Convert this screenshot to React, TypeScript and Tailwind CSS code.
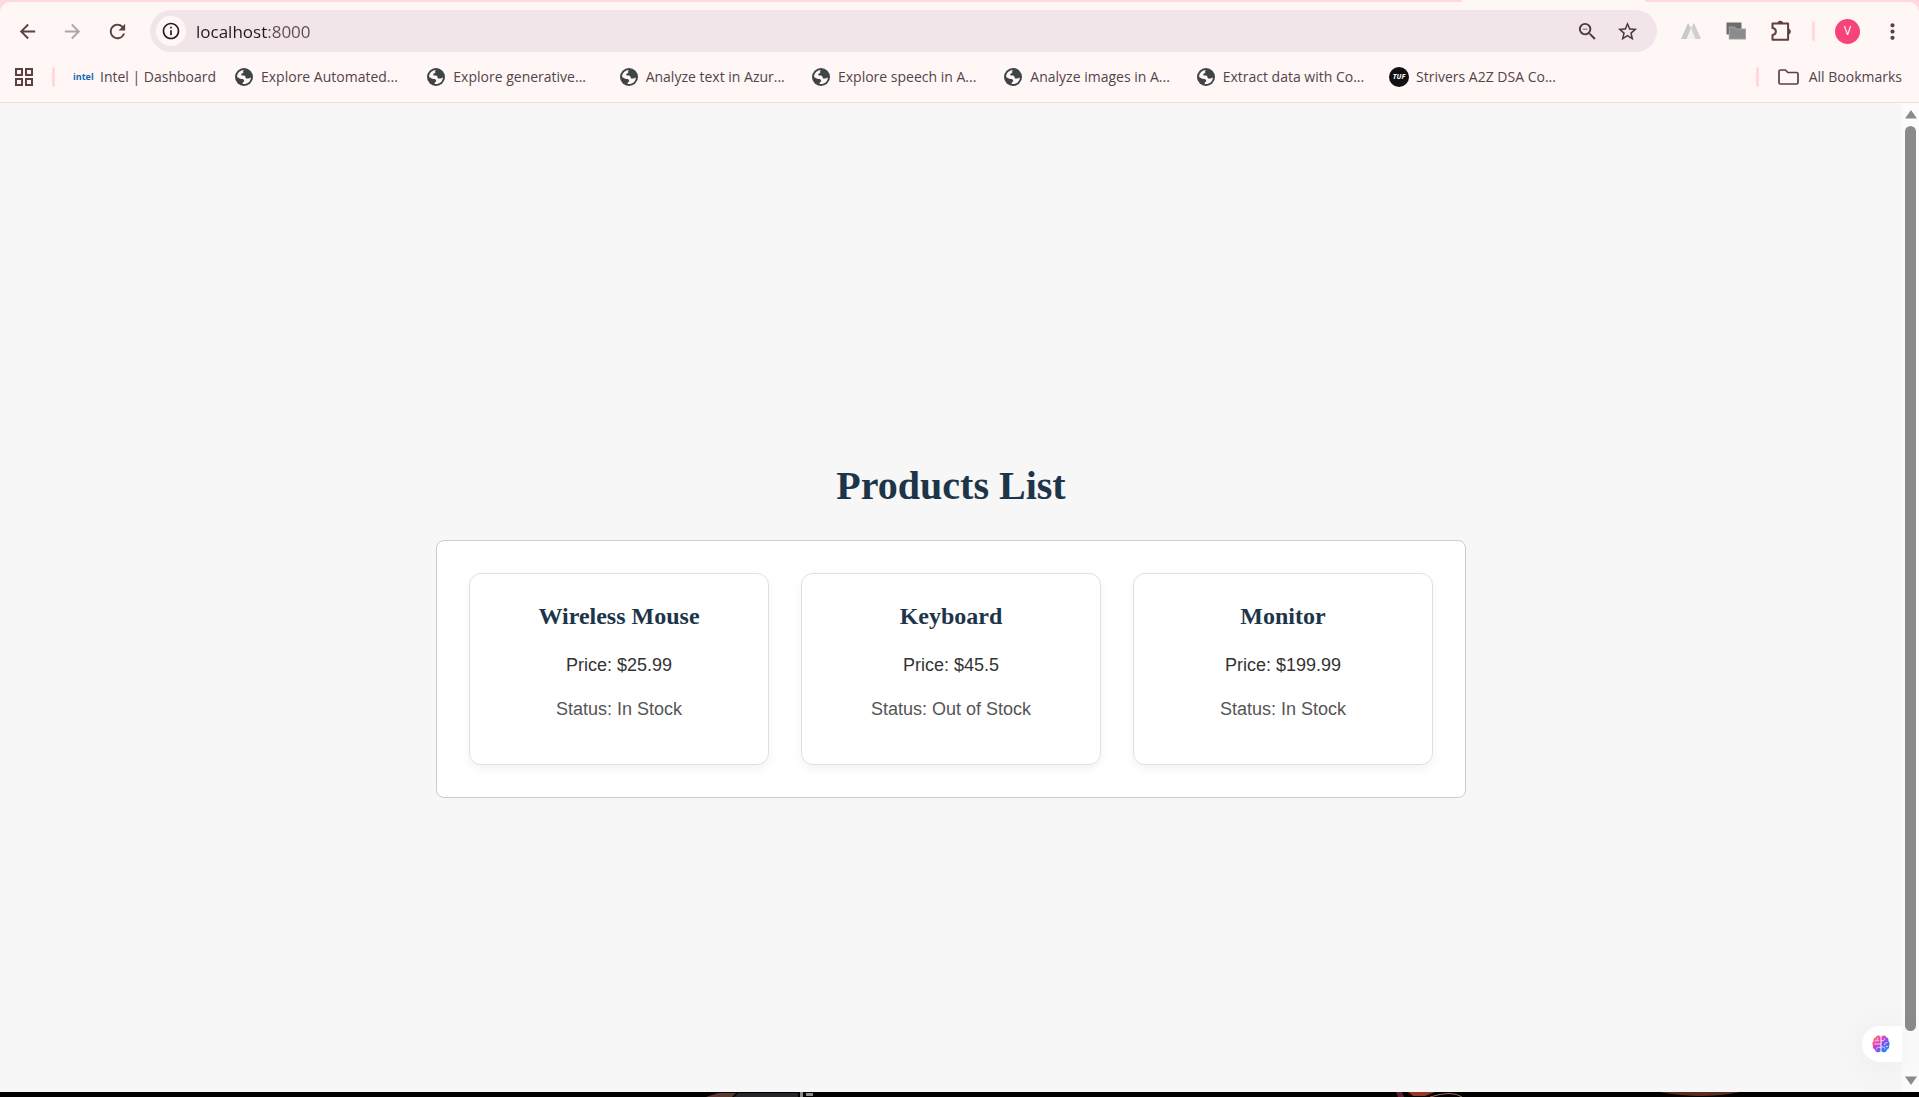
import React from "react";
import {
  MdArrowBack,
  MdArrowForward,
  MdGridView,
  MdMoreVert,
  MdOutlineInfo,
  MdRefresh,
  MdStarBorder,
  MdZoomOut,
} from "react-icons/md";

function GlobeIcon() {
  return (
    <svg viewBox="0 0 18 18" className="size-[18px] shrink-0" aria-hidden="true">
      <circle cx="9" cy="9" r="9" fill="#3f4447" />
      <path
        d="M9.2 2c-.9.5-1.2 1.2-1 1.9.2.9-.2 1.3-1.2 1.5-.8.2-.8.9-.6 1.5.2.8 1 .7 1.9.7 1.300 0 2.200.6 2.300 1.800.1 1 .8 1.200 1.900 1.100 1.400-.1 2.200-.7 3.400-1.100C15.800 13 12.800 16 9 16c-.5 0-.9 0-1.300-.1-.2-.9 0-1.600.8-2 .9-.5.9-1.500.2-2.200-.6-.6-1.500-.5-2.400-.6-1.500-.1-2.200-1-4.200-2C2 5.200 5.200 2 9.200 2Z"
        fill="#fff7f6"
      />
    </svg>
  );
}

function TufIcon() {
  return (
    <span className="flex size-5 shrink-0 items-center justify-center rounded-full bg-[#111] text-[7px] font-bold italic text-white" aria-hidden="true">
      TUF
    </span>
  );
}

function FolderIcon() {
  return (
    <svg viewBox="0 0 21 16" className="h-4 w-[21px]" aria-hidden="true">
      <path
        d="M1 2.500A1.500 1.500 0 0 1 2.500 1H7.500L9.800 3.500H18.500A1.500 1.500 0 0 1 20 5V13.500A1.500 1.500 0 0 1 18.500 15H2.500A1.500 1.500 0 0 1 1 13.500Z"
        fill="none"
        stroke="#5d3f44"
        strokeWidth="1.7"
        strokeLinejoin="round"
      />
    </svg>
  );
}

function PeaksIcon() {
  return (
    <svg viewBox="0 0 20 18" className="h-[18px] w-5" aria-hidden="true">
      <path d="M5 17 10 5l5 12Z" fill="#f3f1f1" />
      <path d="M0 17 7 1 10 6 5.500 17Z" fill="#c9c9c9" />
      <path d="M20 17 13 1 10 6 14.500 17Z" fill="#cfcfcf" />
    </svg>
  );
}

function StackIcon() {
  return (
    <svg viewBox="0 0 20 18" className="h-[18px] w-5" aria-hidden="true">
      <path d="M.5.500h15v12H.5Z" fill="#6b6e6d" />
      <path d="M2.800 4.500h6l1.300 2H20v11H2.800Z" fill="#a2a4a3" />
      <path d="M3.800 5.500h4.500l1.300 2H19v9H3.800Z" fill="#8a8c8b" />
    </svg>
  );
}

function PuzzleIcon() {
  return (
    <svg viewBox="0 0 22 22" className="size-[22px]" aria-hidden="true">
      <path
        d="M2.500 3.500h15.600v16.200H2.500v-4.600c2.300-.4 3.400-1.700 3.400-3.500s-1.100-3.100-3.400-3.500Z"
        fill="none"
        stroke="#5d3f44"
        strokeWidth="2"
        strokeLinejoin="round"
      />
      <path d="M7.500 3.500a2.800 2.800 0 0 1 5.600 0ZM18 8.800a2.800 2.800 0 0 1 0 5.600Z" fill="#5d3f44" />
    </svg>
  );
}

function BrainIcon() {
  return (
    <svg viewBox="0 0 18 18" className="size-[18px]" aria-hidden="true">
      <defs>
        <linearGradient id="brain" x1="0" y1="0" x2="1" y2="1">
          <stop offset="0.08" stopColor="#ff8a3c" />
          <stop offset="0.3" stopColor="#f546b4" />
          <stop offset="0.55" stopColor="#8c4de8" />
          <stop offset="0.85" stopColor="#1c8cf5" />
        </linearGradient>
      </defs>
      <path
        d="M8.500 1.500C7 0 4.300.3 3.700 2.300 1.800 2.700 1.200 4.500 1.700 6 .2 7 0 9.300 1 10.500c-.6 2 .3 3.500 1.900 3.900C3.500 17 6.500 18.200 8.500 16.600ZM9.500 1.500c1.500-1.500 4.200-1.200 4.800.8 1.900.4 2.500 2.200 2 3.700 1.500 1 1.700 3.300.7 4.500.6 2-.3 3.500-1.900 3.900-.6 2.600-3.600 3.800-5.600 2.200Z"
        fill="url(#brain)"
      />
      <path
        d="M8.500 9H3M5.500 3.500c0 1.500-.8 2.300-2 2.500M6.800 5.800H5.500M8.500 12.300H6.300c-1 0-1.600.8-1.600 1.800M9.500 5.500h1.800c1 0 1.500-.7 1.500-1.700M15 7.500c-1.500 0-2.300.8-2.300 2.200M9.500 12h2c1 0 1.500.7 1.500 1.800M15.500 11.500h-1.300"
        fill="none"
        stroke="#fff"
        strokeOpacity="0.8"
        strokeWidth="0.9"
        strokeLinecap="round"
      />
    </svg>
  );
}

const toolButton = "flex h-10 w-[45px] shrink-0 items-center justify-center text-[#5d3f44]";

function Toolbar() {
  return (
    <div className="flex h-[58px] items-center pl-[5px] pr-1">
      <button aria-label="Back" className={toolButton}>
        <MdArrowBack size={23} />
      </button>
      <button aria-label="Forward" disabled className="flex h-10 w-[45px] shrink-0 items-center justify-center text-[#b3a5a7]">
        <MdArrowForward size={23} />
      </button>
      <button aria-label="Reload" className={toolButton}>
        <MdRefresh size={23} />
      </button>
      <div className="ml-2.5 flex h-[42px] flex-1 items-center rounded-full bg-[#f2e5ea] pl-1.5">
        <button aria-label="Site information" className="flex size-[30px] shrink-0 items-center justify-center rounded-full bg-[#fff7f6] text-[#22191b]">
          <MdOutlineInfo size={20} />
        </button>
        <input
          aria-label="Address"
          defaultValue="localhost:8000"
          className="ml-2.5 h-8 min-w-0 flex-1 bg-[linear-gradient(to_right,#22191b_72px,#5d4a4f_72px)] bg-clip-text text-[17px] text-transparent outline-none"
        />
        <button aria-label="Zoom" className="flex h-8 w-10 items-center justify-center text-[#4c3a3e]">
          <MdZoomOut size={23} />
        </button>
        <button aria-label="Bookmark this tab" className="mr-2.5 flex h-8 w-10 items-center justify-center text-[#4c3a3e]">
          <MdStarBorder size={23} />
        </button>
      </div>
      <div className="ml-[11px] flex items-center">
        <button aria-label="Peaks extension" className={toolButton}>
          <PeaksIcon />
        </button>
        <button aria-label="Tab stack extension" className={toolButton}>
          <StackIcon />
        </button>
        <button aria-label="Extensions" className={toolButton}>
          <PuzzleIcon />
        </button>
        <span className="ml-[9px] h-5 w-[3px] rounded-full bg-[#ffd9df]" />
        <button aria-label="Profile" className="ml-5 mr-2.5 flex size-[25px] items-center justify-center rounded-full bg-[#f8437a] text-xs text-white">
          V
        </button>
        <button aria-label="Menu" className={toolButton}>
          <MdMoreVert size={25} />
        </button>
      </div>
    </div>
  );
}

const bookmarks = [
  "Explore Automated...",
  "Explore generative...",
  "Analyze text in Azur...",
  "Explore speech in A...",
  "Analyze images in A...",
  "Extract data with Co...",
];

function BookmarksBar() {
  return (
    <nav aria-label="Bookmarks" className="flex h-[42px] items-center pb-2 pl-3 pr-[17px] text-sm whitespace-nowrap text-[#54434a]">
      <button aria-label="Apps" className="text-[#5d3f44]">
        <MdGridView size={24} />
      </button>
      <span className="ml-4 h-5 w-[3px] shrink-0 rounded-full bg-[#ffd9df]" />
      <a href="#intel" className="ml-[18px] flex w-[162px] shrink-0 items-center gap-2">
        <span className="w-[19px] text-[9px] font-bold text-[#0f6ab4]" aria-hidden="true">
          intel
        </span>
        Intel | Dashboard
      </a>
      <div className="flex w-[1154px] min-w-0">
        {bookmarks.map((label) => (
          <a key={label} href="#bookmark" className="flex flex-1 items-center gap-2">
            <GlobeIcon />
            {label}
          </a>
        ))}
      </div>
      <a href="#striver" className="flex items-center gap-[7px]">
        <TufIcon />
        Strivers A2Z DSA Co...
      </a>
      <span className="ml-auto h-5 w-[3px] shrink-0 rounded-full bg-[#ffd9df]" />
      <button className="ml-[19px] flex items-center gap-[10px]">
        <FolderIcon />
        All Bookmarks
      </button>
    </nav>
  );
}

const products = [
  { name: "Wireless Mouse", price: 25.99, status: "In Stock" },
  { name: "Keyboard", price: 45.5, status: "Out of Stock" },
  { name: "Monitor", price: 199.99, status: "In Stock" },
];

function ProductCard({ name, price, status }: (typeof products)[number]) {
  return (
    <article className="flex w-[300px] flex-col gap-4 rounded-xl border border-[#e0e0e0] bg-white pt-6 pb-[41px] text-center text-lg shadow-[0_4px_8px_rgba(0,0,0,0.05)]">
      <h2 className="mb-px font-['Liberation_Serif',serif] text-2xl leading-9 font-bold text-[#1d3549]">{name}</h2>
      <p className="text-[#333]">{`Price: $${price}`}</p>
      <p className="text-[#555]">{`Status: ${status}`}</p>
    </article>
  );
}

function Scrollbar() {
  return (
    <div className="flex w-[17px] shrink-0 flex-col items-center bg-[#fcfcfc] py-[7px] text-[#8b8b8b]" aria-hidden="true">
      <svg viewBox="0 0 12 9" className="h-[9px] w-3" fill="currentColor">
        <path d="M6 0 12 8.500H0Z" />
      </svg>
      <div className="mt-[7px] mb-[45px] w-[11px] flex-1 rounded-full bg-[#8b8b8b]" />
      <svg viewBox="0 0 12 9" className="h-[9px] w-3" fill="currentColor">
        <path d="M6 9 12 .5H0Z" />
      </svg>
    </div>
  );
}

function WallpaperEdge() {
  return (
    <svg viewBox="0 0 1919 5" preserveAspectRatio="none" className="h-[5px] w-full shrink-0 bg-black" aria-hidden="true">
      <path d="M706 5 718 1h18l-4 4Z" fill="#5a3a30" />
      <path d="M738 1h60v4h-64Z" fill="#26262a" />
      <path d="M800 0h3v5h-3ZM806 1h7v3h-7Z" fill="#8a8a8c" />
      <path d="M1396 0h6l2 5h-6Z" fill="#5b1f38" />
      <path d="M1408 0h27l-10 4h-12Z" fill="#9c3426" />
      <path d="M1430 5q22-7 32 0" fill="none" stroke="#a06a60" />
      <path d="M1660 0h80q-38 8-80 0Z" fill="#5b2d1c" />
    </svg>
  );
}

export default function App() {
  return (
    <div className="flex min-h-screen flex-col bg-[#f7f7f7] font-['Liberation_Sans',Arial,sans-serif]">
      <header className="border-b border-[#f8d9dd] bg-[#ffd9de] font-['Open_Sans','Segoe_UI',sans-serif]">
        <div className="flex h-0.5 justify-end pr-[274px]">
          <div className="w-[183px] bg-[#fff7f6]" />
        </div>
        <div className="rounded-t-[10px] bg-[#fff7f6]">
          <Toolbar />
          <BookmarksBar />
        </div>
      </header>
      <div className="relative flex flex-1">
        <main className="flex flex-1 flex-col items-center justify-center pt-[59px]">
          <h1 className="mb-6 font-['Liberation_Serif',serif] text-[40px] leading-[60px] font-bold text-[#1d3549]">Products List</h1>
          <section className="flex gap-8 rounded-lg border border-[#ccc] bg-white p-8">
            {products.map((product) => (
              <ProductCard key={product.name} {...product} />
            ))}
          </section>
        </main>
        <button
          aria-label="Assistant"
          className="absolute right-[17px] bottom-[30px] flex h-9 w-10 items-center rounded-l-full bg-white pl-2.5 shadow-[0_4px_40px_rgba(0,0,0,0.08)]"
        >
          <BrainIcon />
        </button>
        <Scrollbar />
      </div>
      <WallpaperEdge />
    </div>
  );
}
